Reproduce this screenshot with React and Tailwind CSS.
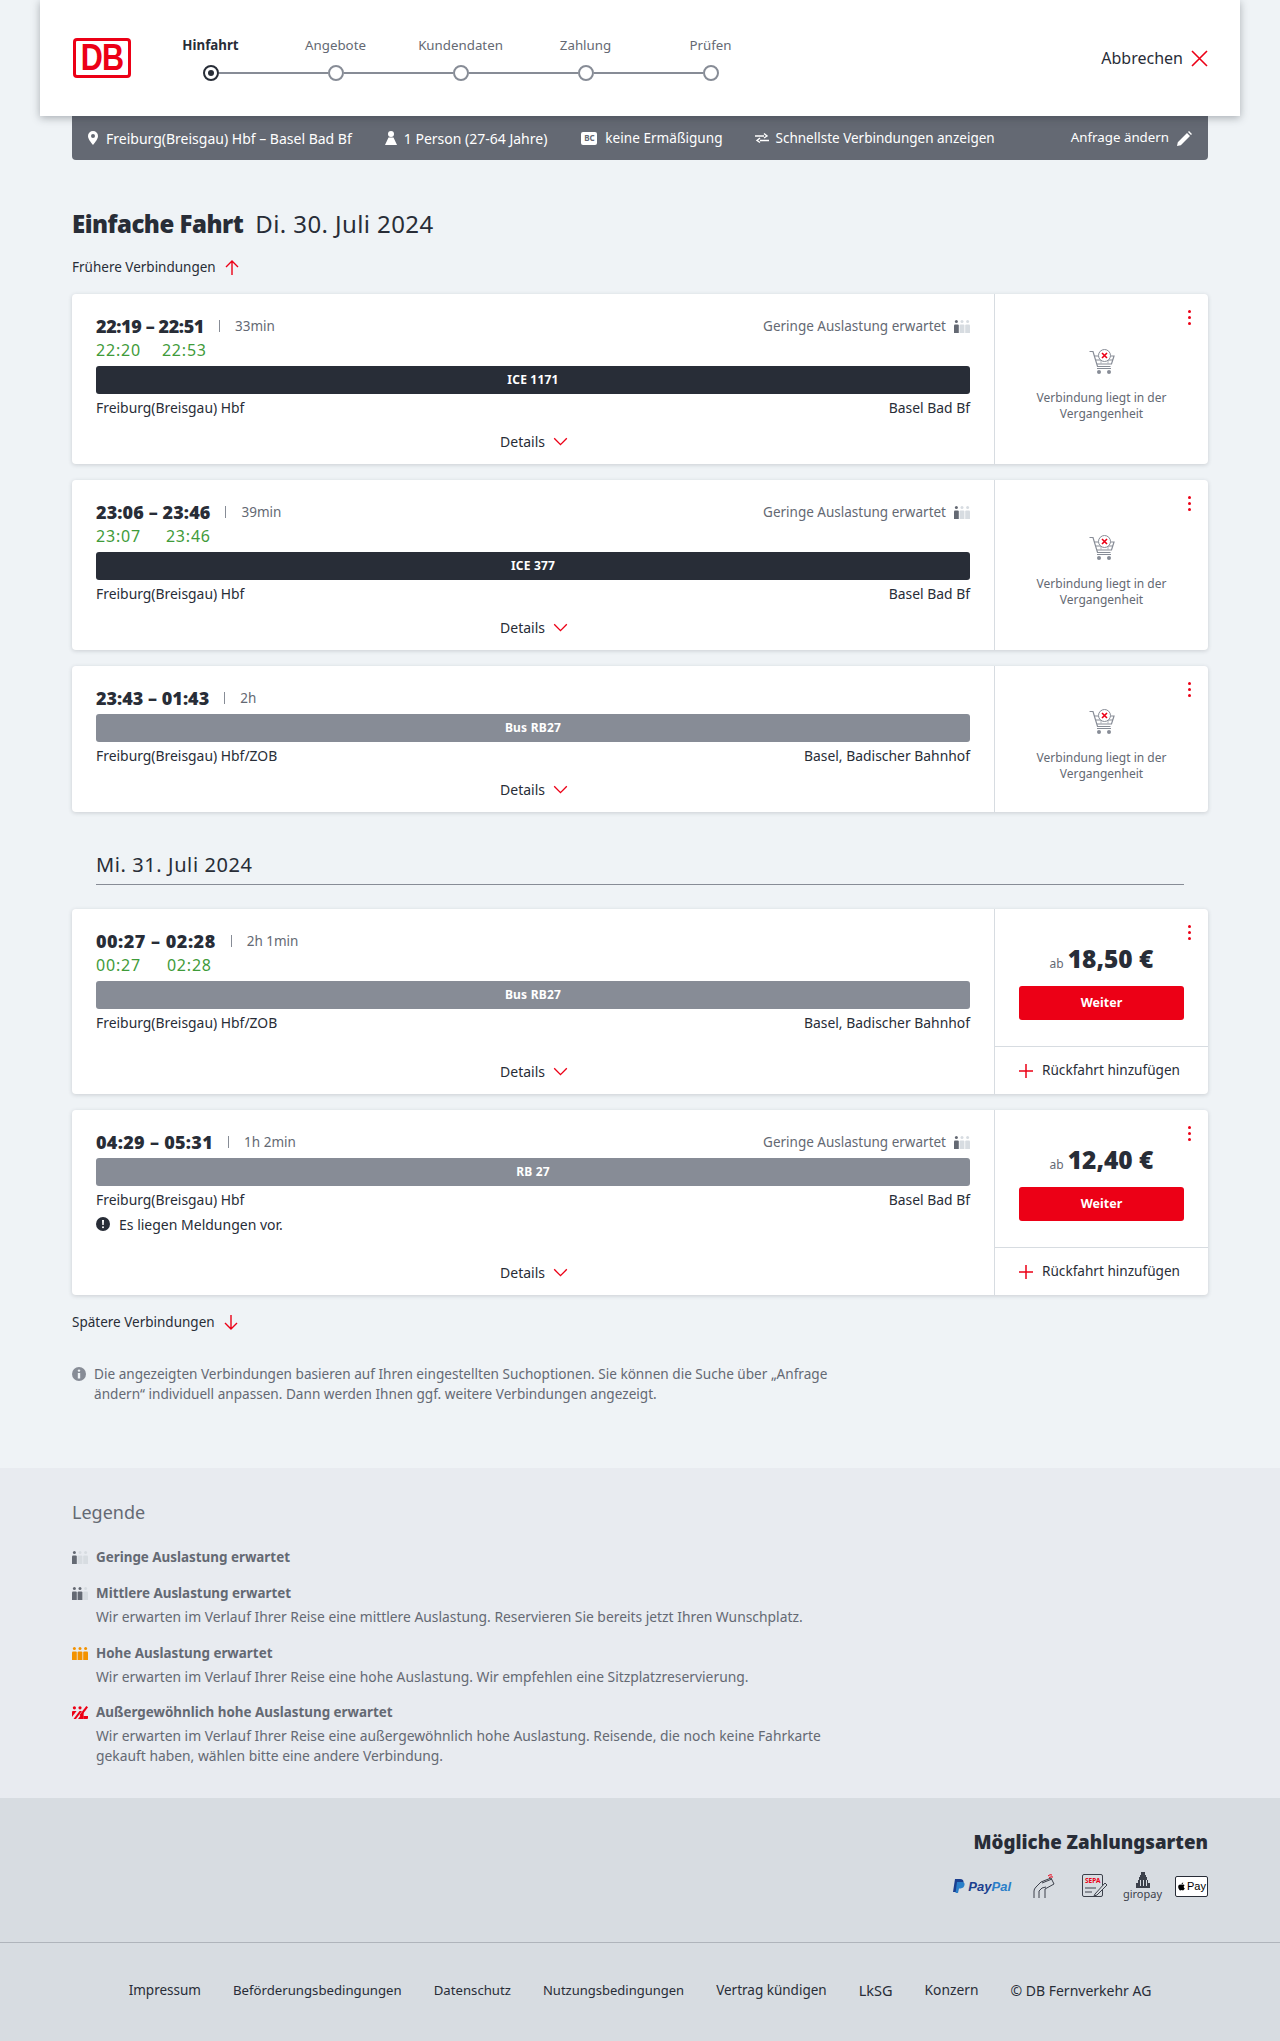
import React from "react";
import { FaApple } from "react-icons/fa";

const FONT = "font-['Noto_Sans',sans-serif]";

const steps = ["Hinfahrt", "Angebote", "Kundendaten", "Zahlung", "Prüfen"];

const Occupancy = ({ level = 1, color = "#646973", muted = "#d7dce1", className = "" }) => (
  <svg viewBox="0 0 16 13" className={`w-4 h-[13px] ${className}`}>
    {[0, 1, 2].map((i) => {
      const x = i * 5.6;
      const fill = i < level ? color : muted;
      return (
        <g key={i} fill={fill}>
          <circle cx={x + 2.4} cy="1.6" r="1.5" />
          <path d={`M${x} 5.5q0-1 1-1h2.8q1 0 1 1V13H${x}z`} />
        </g>
      );
    })}
  </svg>
);

const OverOccupancy = () => (
  <svg viewBox="0 0 16 13" className="w-4 h-[13px]">
    <g fill="#ec0016">
      <circle cx="2.4" cy="1.8" r="1.6" />
      <circle cx="8" cy="1.8" r="1.6" />
      <path d="M0 6q0-1 1-1h3.6L0 11z" />
      <path d="M1.5 13l6-8H10L4 13z" />
      <path d="M6 13l5.6-7.4V13z" />
      <path d="M11.5 13v-3H16v2q0 1-1 1z" />
      <path d="M7.5 9L14.3 0 16 1.2 9 10.4z" />
    </g>
  </svg>
);

const Kebab = () => (
  <div className="flex flex-col gap-[3px] absolute top-[16px] right-[17px]">
    <span className="w-[3px] h-[3px] rounded-full bg-[#ec0016]" />
    <span className="w-[3px] h-[3px] rounded-full bg-[#ec0016]" />
    <span className="w-[3px] h-[3px] rounded-full bg-[#ec0016]" />
  </div>
);

const Chevron = () => (
  <svg viewBox="0 0 16 10" className="w-[15px] h-[9px]" fill="none" stroke="#ec0016" strokeWidth="1.5">
    <path d="M1 1.5l7 7 7-7" />
  </svg>
);

const CartPast = () => (
  <svg viewBox="0 0 26 26" className="w-[26px] h-[26px]" fill="none">
    <path d="M0.5 2.5h3.5l4.5 15h13" stroke="#878c96" strokeWidth="1.2" />
    <path d="M5 7h20l-2.5 8H8" stroke="#878c96" strokeWidth="1.2" />
    <path d="M7 11h17" stroke="#878c96" strokeWidth="1" />
    <path d="M12 7v8M19 7v8" stroke="#afb4bb" strokeWidth="1" />
    <circle cx="15.5" cy="6.5" r="6" fill="#fff" stroke="#878c96" strokeWidth="1" />
    <path d="M13 4l5 5M18 4l-5 5" stroke="#ec0016" strokeWidth="1.6" />
    <circle cx="10" cy="23" r="2" fill="#878c96" />
    <circle cx="20" cy="23" r="2" fill="#878c96" />
    <path d="M8 19.5h14" stroke="#878c96" strokeWidth="1" />
  </svg>
);

const PastPanel = () => (
  <div className="relative w-[214px] shrink-0 border-l border-[#d7dce1] flex flex-col items-center justify-center pt-3">
    <Kebab />
    <CartPast />
    <p className="text-[12px] leading-4 text-[#646973] text-center mt-[15px] w-[165px]">
      Verbindung liegt in der Vergangenheit
    </p>
  </div>
);

const PricePanel = ({ price }) => (
  <div className="relative w-[214px] shrink-0 border-l border-[#d7dce1] flex flex-col">
    <Kebab />
    <div className="flex-1 flex flex-col items-center px-6 pt-[32px]">
      <div className="flex items-baseline h-9">
        <span className="text-[12px] text-[#646973] mr-1">ab</span>
        <span className="text-[24.5px] leading-9 font-black text-[#282d37]">{price}</span>
      </div>
      <button className="mt-[9px] w-[165px] h-[34px] bg-[#ec0016] rounded-[3px] text-white text-[12.5px] font-bold">
        Weiter
      </button>
    </div>
    <div className="h-[48px] border-t border-[#d7dce1] flex items-center pl-6 gap-[9px]">
      <svg viewBox="0 0 14 14" className="w-[14px] h-[14px]" stroke="#ec0016" strokeWidth="1.5">
        <path d="M7 0v14M0 7h14" />
      </svg>
      <span className="text-[13.6px] text-[#282d37]">Rückfahrt hinzufügen</span>
    </div>
  </div>
);

const Connection = ({ dep, arr, dur, delay, gapClass = "gap-[21px]", timeClass = "tracking-[-0.4px]", occupancy, train, dark, from, to, note, price }) => (
  <div className="flex h-full bg-white rounded-[4px] shadow-[0_1px_4px_rgba(40,45,55,0.18)]">
    <div className="flex-1 min-w-0 pl-6 pr-6 pt-5 pb-[13px] flex flex-col">
      <div className="flex items-center h-6">
        <span className={`text-[18px] font-black text-[#282d37] ${timeClass}`}>{dep} – {arr}</span>
        <span className="w-px h-3 bg-[#878c96] mx-[15px]" />
        <span className="text-[13.5px] text-[#646973]">{dur}</span>
        {occupancy && (
          <span className="ml-auto flex items-center gap-2 text-[13.5px] text-[#646973]">
            Geringe Auslastung erwartet
            <Occupancy level={1} />
          </span>
        )}
      </div>
      {delay && (
        <div className={`flex h-6 items-center text-[16px] text-[#3f9b3a] tracking-[0.8px] ${gapClass}`}>
          <span>{delay[0]}</span>
          <span>{delay[1]}</span>
        </div>
      )}
      <div
        className={`mt-1 h-7 rounded-[3px] flex items-center justify-center text-white text-[12px] font-bold tracking-[0.2px] ${
          dark ? "bg-[#282d37]" : "bg-[#878c96]"
        }`}
      >
        {train}
      </div>
      <div className="mt-1 h-5 flex justify-between items-center text-[13.9px] text-[#282d37]">
        <span>{from}</span>
        <span>{to}</span>
      </div>
      {note && (
        <div className="mt-1 h-5 flex items-center gap-[9px] text-[14px] text-[#282d37]">
          <svg viewBox="0 0 14 14" className="w-[14px] h-[14px]">
            <circle cx="7" cy="7" r="7" fill="#282d37" />
            <path d="M6 3h2l-.3 5H6.3z" fill="#fff" />
            <circle cx="7" cy="10.3" r="1" fill="#fff" />
          </svg>
          {note}
        </div>
      )}
      <div className="mt-auto pt-[13px] h-[33px] flex items-center justify-center gap-2 pl-[2px] text-[14px] text-[#282d37]">
        Details
        <Chevron />
      </div>
    </div>
    {price ? <PricePanel price={price} /> : <PastPanel />}
  </div>
);

const ArrowLink = ({ label, up }) => (
  <div className="flex items-center gap-[9px] h-6 text-[13.5px] text-[#282d37]">
    {label}
    <svg viewBox="0 0 14 15" className="w-[14px] h-[15px]" fill="none" stroke="#ec0016" strokeWidth="1.4">
      {up ? <path d="M7 15V1M1 7l6-6 6 6" /> : <path d="M7 0v14M1 8l6 6 6-6" />}
    </svg>
  </div>
);

const LegendItem = ({ icon, title, text }) => (
  <div className="flex flex-col">
    <div className="flex items-center h-5 gap-2">
      {icon}
      <span className="text-[13.4px] font-bold text-[#646973]">{title}</span>
    </div>
    {text && <p className="mt-[4px] pl-6 text-[13.85px] leading-5 text-[#646973] w-[780px]">{text}</p>}
  </div>
);

export default function App() {
  return (
    <div className={`${FONT} bg-[#eff3f6] w-[1280px] h-[2041px] overflow-hidden flex flex-col`}>
      <header className="relative z-10 mx-10 h-[116px] shrink-0 bg-white shadow-[0_2px_8px_rgba(40,45,55,0.35)] flex items-center pl-[33px] pr-8">
        <div className="w-[58px] h-[40px] bg-[#ec0016] rounded-[4px] p-[3px]">
          <div className="w-full h-full bg-white rounded-[1px] p-[2px]">
            <div className="w-full h-full flex items-center justify-center text-[#ec0016] text-[36px] leading-none font-bold font-['Liberation_Sans',sans-serif] tracking-[-1px] scale-x-85">
              DB
            </div>
          </div>
        </div>
        <div className="ml-[17px] flex flex-col">
          <div className="flex">
            {steps.map((s, i) => (
              <span
                key={s}
                className={`w-[125px] text-center text-[13.3px] leading-5 ${
                  i === 0 ? "font-bold text-[#282d37]" : "text-[#646973]"
                }`}
              >
                {s}
              </span>
            ))}
          </div>
          <div className="flex items-center pl-[54.5px] mt-[10px]">
            {steps.map((s, i) => (
              <React.Fragment key={s}>
                <span
                  className={`w-4 h-4 rounded-full border-2 shrink-0 bg-white flex items-center justify-center ${
                    i === 0 ? "border-[#282d37]" : "border-[#878c96]"
                  }`}
                >
                  {i === 0 && <span className="w-[6px] h-[6px] rounded-full bg-[#282d37]" />}
                </span>
                {i < 4 && <span className="w-[109px] h-[2px] bg-[#878c96]" />}
              </React.Fragment>
            ))}
          </div>
        </div>
        <div className="ml-auto flex items-center gap-2 text-[16px] text-[#282d37]">
          Abbrechen
          <svg viewBox="0 0 17 17" className="w-[17px] h-[17px]" stroke="#ec0016" strokeWidth="1.6">
            <path d="M1 1l15 15M16 1L1 16" />
          </svg>
        </div>
      </header>

      <div className="mx-[72px] h-[44px] shrink-0 bg-[#646973] rounded-b-[4px] flex items-center px-4 text-white text-[14px]">
        <svg viewBox="0 0 10 14" className="w-[10px] h-[14px] mr-2" fill="#fff">
          <path fillRule="evenodd" d="M5 0a5 5 0 015 5c0 3-3 6.500-5 9C3 11.500 0 8 0 5a5 5 0 015-5zm0 3a2 2 0 100 4 2 2 0 000-4z" />
        </svg>
        <span>Freiburg(Breisgau) Hbf – Basel Bad Bf</span>
        <svg viewBox="0 0 12 14" className="w-[12px] h-[14px] ml-[33px] mr-[7px]" fill="#fff">
          <circle cx="6" cy="3" r="3" />
          <path d="M3.500 6.500h5L12 14H0z" />
        </svg>
        <span>1 Person (27-64 Jahre)</span>
        <div className="ml-[34px] mr-2 w-4 h-[13px] bg-white rounded-[2px] flex items-center justify-center text-[#646973] text-[8px] leading-none font-bold">
          BC
        </div>
        <span className="text-[13.6px]">keine Ermäßigung</span>
        <svg viewBox="0 0 14 12" className="w-[14px] h-[12px] ml-8 mr-[7px]" fill="none" stroke="#fff" strokeWidth="1.4">
          <path d="M0 4h9M9 1.500l3 2.500-3 2M14 8.500H5M5 6l-3 2.500 3 2" />
        </svg>
        <span className="text-[13.5px]">Schnellste Verbindungen anzeigen</span>
        <span className="ml-auto text-[13.3px]">Anfrage ändern</span>
        <svg viewBox="0 0 15 15" className="w-[15px] h-[15px] ml-2" fill="#fff">
          <path d="M0 15l.8-3.800L10 2l3 3-9.200 9.200zM11 1l1-1 3 3-1 1z" />
        </svg>
      </div>

      <main className="mx-[72px] shrink-0">
        <div className="mt-[48px] h-8 flex items-center text-[24px] text-[#282d37]">
          <span className="font-black tracking-[-0.5px]">Einfache Fahrt</span>
          <span className="ml-3 tracking-[0.4px]">Di. 30. Juli 2024</span>
        </div>
        <div className="mt-[15px]">
          <ArrowLink label="Frühere Verbindungen" up />
        </div>
        <div className="mt-[15px] flex flex-col gap-4">
          <Connection dep="22:19" arr="22:51" dur="33min" delay={["22:20", "22:53"]} occupancy train="ICE 1171" dark from="Freiburg(Breisgau) Hbf" to="Basel Bad Bf" />
          <Connection dep="23:06" arr="23:46" dur="39min" delay={["23:07", "23:46"]} gapClass="gap-[25px]" timeClass="tracking-[0.1px]" occupancy train="ICE 377" dark from="Freiburg(Breisgau) Hbf" to="Basel Bad Bf" />
          <Connection dep="23:43" arr="01:43" dur="2h" timeClass="tracking-[0px]" train="Bus RB27" from="Freiburg(Breisgau) Hbf/ZOB" to="Basel, Badischer Bahnhof" />
        </div>
        <div className="mx-6 mt-[36px] h-[37px] border-b border-[#878c96] flex items-center pb-[2px] text-[20px] text-[#282d37] tracking-[0.6px]">
          Mi. 31. Juli 2024
        </div>
        <div className="mt-6 flex flex-col gap-4">
          <div className="h-[185px]">
            <Connection dep="00:27" arr="02:28" dur="2h 1min" delay={["00:27", "02:28"]} gapClass="gap-[26px]" timeClass="tracking-[0.5px]" train="Bus RB27" from="Freiburg(Breisgau) Hbf/ZOB" to="Basel, Badischer Bahnhof" price="18,50 €" />
          </div>
          <div className="h-[185px]">
            <Connection dep="04:29" arr="05:31" dur="1h 2min" timeClass="tracking-[0.3px]" occupancy train="RB 27" from="Freiburg(Breisgau) Hbf" to="Basel Bad Bf" note="Es liegen Meldungen vor." price="12,40 €" />
          </div>
        </div>
        <div className="mt-[15px]">
          <ArrowLink label="Spätere Verbindungen" />
        </div>
        <div className="mt-[30px] flex gap-[8px] w-[790px]">
          <svg viewBox="0 0 14 14" className="w-[14px] h-[14px] mt-[3px] shrink-0">
            <circle cx="7" cy="7" r="7" fill="#878c96" />
            <circle cx="7" cy="3.600" r="1.200" fill="#eff3f6" />
            <path d="M5.800 6h2.400v5.500H5.800z" fill="#eff3f6" />
          </svg>
          <p className="text-[13.6px] leading-5 text-[#646973]">
            Die angezeigten Verbindungen basieren auf Ihren eingestellten Suchoptionen. Sie können die Suche über „Anfrage ändern“ individuell anpassen. Dann werden Ihnen ggf. weitere Verbindungen angezeigt.
          </p>
        </div>
      </main>

      <section className="mt-[64px] h-[330px] shrink-0 bg-[#e8ebf0] px-[72px] pt-[30px]">
        <h2 className="text-[18px] leading-7 text-[#646973]">Legende</h2>
        <div className="mt-[21px] flex flex-col">
          <LegendItem icon={<Occupancy level={1} />} title="Geringe Auslastung erwartet" />
          <div className="mt-4">
            <LegendItem icon={<Occupancy level={2} />} title="Mittlere Auslastung erwartet" text="Wir erwarten im Verlauf Ihrer Reise eine mittlere Auslastung. Reservieren Sie bereits jetzt Ihren Wunschplatz." />
          </div>
          <div className="mt-4">
            <LegendItem icon={<Occupancy level={3} color="#f39200" />} title="Hohe Auslastung erwartet" text="Wir erwarten im Verlauf Ihrer Reise eine hohe Auslastung. Wir empfehlen eine Sitzplatzreservierung." />
          </div>
          <div className="mt-[15px]">
            <LegendItem icon={<OverOccupancy />} title="Außergewöhnlich hohe Auslastung erwartet" text="Wir erwarten im Verlauf Ihrer Reise eine außergewöhnlich hohe Auslastung. Reisende, die noch keine Fahrkarte gekauft haben, wählen bitte eine andere Verbindung." />
          </div>
        </div>
      </section>

      <section className="h-[145px] shrink-0 bg-[#d7dce1] px-[72px] pt-[30px] flex flex-col items-end border-b border-[#afb4bb]">
        <h2 className="text-[18.7px] leading-7 font-black text-[#282d37]">Mögliche Zahlungsarten</h2>
        <div className="mt-[14px] flex items-center h-[32px]">
          <div className="flex items-center gap-[3px]">
            <svg viewBox="0 0 12 14" className="w-[12px] h-[14px]">
              <path d="M2 0h5q4 0 3.500 3.500T6 7.500H4.500L3.500 13H0z" fill="#1b3f8f" />
              <path d="M4 3h5q3 0 2.500 3T7.500 9.500H6L5 14H2.500z" fill="#2a7fc9" />
            </svg>
            <span className="text-[13px] font-bold italic leading-none font-['Liberation_Sans',sans-serif]">
              <span className="text-[#1b3f8f]">Pay</span>
              <span className="text-[#2a7fc9]">Pal</span>
            </span>
          </div>
          <svg viewBox="0 0 22 24" className="w-[22px] h-[24px] ml-[22px]" fill="none" stroke="#3c414b" strokeWidth="1">
            <path d="M1 24v-7q0-2 2-4l5-5 10-4 3 6-9 5v9" />
            <path d="M6 24v-7l3-3 4-1M9 9l10-4" />
            <path d="M15 2q2-2 4-1M16 3.500q2-1 4-.5" stroke="#ec0016" />
          </svg>
          <svg viewBox="0 0 26 24" className="w-[26px] h-[24px] ml-[27px]" fill="none" stroke="#3c414b" strokeWidth="1">
            <rect x="0.500" y="0.500" width="20" height="22" rx="1.500" />
            <path d="M3 14h11M3 18h7" />
            <path d="M13 20l-1 2 3-1 10-10-2-2z" fill="#d7dce1" />
            <text x="3" y="9" fontSize="6.500" fontWeight="700" fill="#ec0016" stroke="none">SEPA</text>
          </svg>
          <div className="ml-[18px] w-[33px] flex flex-col items-center">
            <svg viewBox="0 0 14 16" className="w-[14px] h-[16px]" fill="#3c414b">
              <path d="M5 0h4v3h1v2h1v3h1v3h2v5H0v-5h2V8h1V5h1V3h1z" />
              <path d="M4 8h1v6H4zM7 8h1v6H7zM10 8h1v6h-1z" fill="#d7dce1" />
            </svg>
            <span className="text-[11px] leading-[12px] text-[#3c414b]">giropay</span>
          </div>
          <div className="ml-4 w-[33px] h-[21px] bg-white border border-[#282d37] rounded-[2px] flex items-center justify-center gap-[1px] text-[11px] leading-none text-black font-['Liberation_Sans',sans-serif]">
            <FaApple className="w-[9px] h-[9px]" />
            Pay
          </div>
        </div>
      </section>

      <footer className="flex-1 bg-[#d7dce1] pb-[3px] flex items-center justify-center gap-8 text-[13.5px] text-[#282d37]">
        <span>Impressum</span>
        <span className="text-[13.2px]">Beförderungsbedingungen</span>
        <span className="text-[13.2px]">Datenschutz</span>
        <span className="text-[13px]">Nutzungsbedingungen</span>
        <span>Vertrag kündigen</span>
        <span className="text-[14.5px]">LkSG</span>
        <span className="text-[13.8px]">Konzern</span>
        <span className="text-[14px]">© DB Fernverkehr AG</span>
      </footer>
    </div>
  );
}
